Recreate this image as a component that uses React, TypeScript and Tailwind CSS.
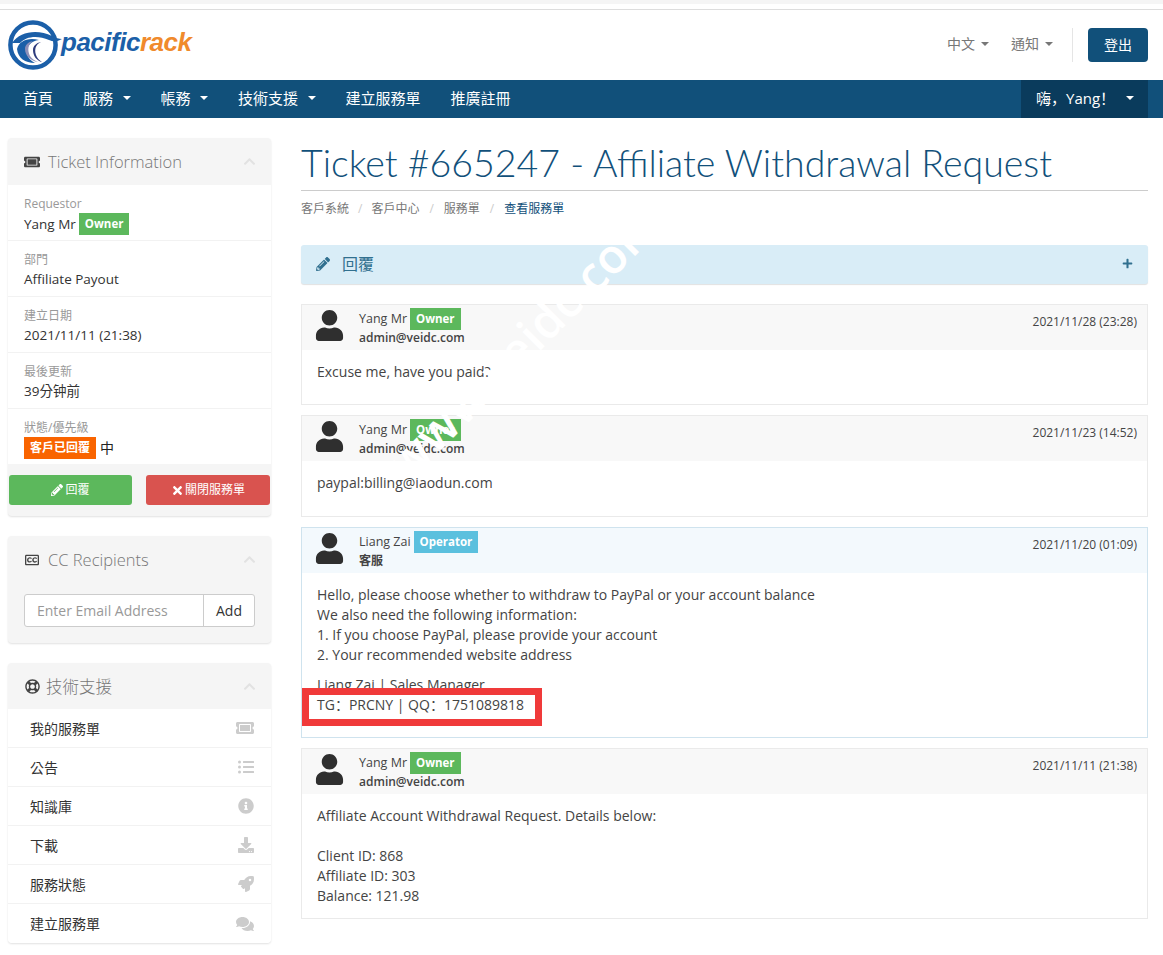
import type { ReactNode } from 'react'
import {
  FaChevronUp,
  FaComments,
  FaDownload,
  FaInfoCircle,
  FaListUl,
  FaPencilAlt,
  FaPlus,
  FaRegClosedCaptioning,
  FaRegLifeRing,
  FaRocket,
  FaTicketAlt,
  FaTimes,
  FaUser,
} from 'react-icons/fa'

const sans = '[font-family:"Open_Sans","Noto_Sans_CJK_TC",sans-serif]'
const sansSc = '[font-family:"Open_Sans","Noto_Sans_CJK_SC",sans-serif]'

function Caret({ className = 'border-t-white' }: { className?: string }) {
  return <span className={`inline-block h-0 w-0 border-x-[4px] border-t-[4px] border-x-transparent ${className}`} />
}

function Logo() {
  return (
    <div className="flex items-center">
      <svg width="54" height="52" viewBox="0 0 54 52">
        <circle cx="25" cy="26" r="22.6" fill="none" stroke="#1b5fa8" strokeWidth="4.5" />
        <path d="M4 24C12 12 30 10 44 17c4 2 7 3 10 3-5 3-9 3-13 1C30 16 18 17 12 24Z" fill="#1b5fa8" />
        <path d="M9 30c2-8 11-12 22-9-8 1-13 6-12 14 1 4 4 7 8 9-10 0-17-5-18-14Z" fill="#1b5fa8" />
        <path d="M25 22c-5 3-6 9-3 15 2 3 5 5 8 6-7-1-13-6-13-13 0-4 3-7 8-8Z" fill="#8d8fb8" />
        <path d="M33 23c-5 2-7 7-5 13 1 3 3 5 6 7-5-1-9-6-9-12 0-4 3-7 8-8Z" fill="#2d3b7c" />
      </svg>
      <span className="-ml-[1px] -mt-[7px] text-[26px] font-bold italic leading-none tracking-[-0.5px] [font-family:'Liberation_Sans',sans-serif]">
        <span className="text-[#1b5fa8]">pacific</span>
        <span className="text-[#f08a2c]">rack</span>
      </span>
    </div>
  )
}

function Header() {
  return (
    <header className="flex h-[70px] items-center justify-between bg-white pl-2 pr-[15px]">
      <Logo />
      <div className="flex items-center text-[14px] text-[#777]">
        <span className="flex items-center gap-[6px] pb-[3px]">
          中文 <Caret className="border-t-[#777]" />
        </span>
        <span className="ml-[22px] flex items-center gap-[6px] pb-[3px]">
          通知 <Caret className="border-t-[#777]" />
        </span>
        <span className="ml-[19px] h-[34px] w-px bg-[#e5e5e5]" />
        <span className="ml-[15px] flex h-[34px] w-[60px] items-center justify-center rounded bg-[#11507a] pb-[2px] text-white">登出</span>
      </div>
    </header>
  )
}

function Nav() {
  const items = [
    { label: '首頁', caret: false },
    { label: '服務', caret: true },
    { label: '帳務', caret: true },
    { label: '技術支援', caret: true },
    { label: '建立服務單', caret: false },
    { label: '推廣註冊', caret: false },
  ]
  return (
    <nav className="flex h-[38px] items-center justify-between bg-[#11507a] pl-[23px] pr-[15px] text-[15px] text-white">
      <div className="flex items-center gap-[30px] pb-[2px]">
        {items.map((item) => (
          <span className="flex items-center gap-[9.5px]" key={item.label}>
            {item.label}
            {item.caret && <Caret />}
          </span>
        ))}
      </div>
      <div className={`flex h-[38px] w-[127px] items-center gap-[11px] bg-[#0a3b5c] pb-[2px] pl-[15px] ${sansSc}`}>
        <span>嗨，Yang！</span>
        <Caret />
      </div>
    </nav>
  )
}

function Panel({ icon, title, bigTitle, children }: { icon: ReactNode; title: string; bigTitle?: boolean; children: ReactNode }) {
  return (
    <section className="rounded bg-[#f5f5f5] shadow-[0_1px_2px_rgba(0,0,0,0.12)]">
      <div className={`flex items-center pl-[16px] pr-[15px] text-[#777] ${bigTitle ? 'h-[46px]' : 'h-[47px]'}`}>
        <span className={`flex w-4 items-center justify-center text-[#555] ${bigTitle ? 'mr-[6px]' : 'mr-[8px]'}`}>{icon}</span>
        <h3 className="mt-[2px] text-[16.5px] font-light">{title}</h3>
        <FaChevronUp className="ml-auto text-[13px] text-[#e2e2e2]" />
      </div>
      {children}
    </section>
  )
}

function InfoRow({ label, children }: { label: string; children: ReactNode }) {
  return (
    <div className="h-[56px] border-b border-[#f2f2f2] pl-[16px] pt-[10px] last:h-[55px] last:border-b-0">
      <div className="text-[12px] leading-[17px] text-[#999]">{label}</div>
      <div className="mt-[1px] flex items-center text-[13.5px] leading-[20px] text-[#333]">{children}</div>
    </div>
  )
}

function Badge({ color, children }: { color: string; children: ReactNode }) {
  return <span className={`ml-[3px] inline-flex h-[22px] items-center px-[6px] text-[11.5px] font-bold text-white ${color}`}>{children}</span>
}

function TicketInfo() {
  return (
    <Panel icon={<FaTicketAlt className="text-[16px] text-[#444]" />} title="Ticket Information">
      <div className="bg-white">
        <InfoRow label="Requestor">
          Yang Mr <Badge color="bg-[#5cb85c]">Owner</Badge>
        </InfoRow>
        <InfoRow label="部門">Affiliate Payout</InfoRow>
        <InfoRow label="建立日期">2021/11/11 (21:38)</InfoRow>
        <InfoRow label="最後更新">39分钟前</InfoRow>
        <InfoRow label="狀態/優先級">
          <span className="inline-flex h-[22px] items-center bg-[#f96400] px-[6px] text-[12px] font-bold text-white">客戶已回覆</span>
          <span className="ml-1 text-[14px] text-[#222]">中</span>
        </InfoRow>
      </div>
      <div className="flex justify-between px-px pb-[11px] pt-[11px]">
        <button className="flex h-[30px] w-[123px] items-center justify-center gap-[2px] rounded-[3px] bg-[#5cb85c] text-[12px] text-white">
          <FaPencilAlt className="text-[12px]" />
          回覆
        </button>
        <button className="flex h-[30px] w-[124px] items-center justify-center gap-[1px] rounded-[3px] bg-[#d9534f] text-[12px] text-white">
          <FaTimes className="text-[13px]" />
          關閉服務單
        </button>
      </div>
    </Panel>
  )
}

function CcPanel() {
  return (
    <Panel icon={<FaRegClosedCaptioning className="text-[14px] text-[#444]" />} title="CC Recipients">
      <div className="px-[16px] pb-[16px] pt-[11px]">
        <div className="flex h-[33px] rounded-[3px] border border-[#ccc] bg-white text-[14px]">
          <div className="flex flex-1 items-center pl-3 text-[#999]">Enter Email Address</div>
          <div className="flex w-[51px] items-center justify-center border-l border-[#ccc] text-[#333]">Add</div>
        </div>
      </div>
    </Panel>
  )
}

function SupportPanel() {
  const rows = [
    { label: '我的服務單', icon: <FaTicketAlt className="text-[18px]" /> },
    { label: '公告', icon: <FaListUl className="text-[16px]" /> },
    { label: '知識庫', icon: <FaInfoCircle className="text-[16px]" /> },
    { label: '下載', icon: <FaDownload className="text-[16px]" /> },
    { label: '服務狀態', icon: <FaRocket className="text-[16px]" /> },
    { label: '建立服務單', icon: <FaComments className="text-[18px]" /> },
  ]
  return (
    <Panel icon={<FaRegLifeRing className="text-[15px] text-[#444]" />} title="技術支援" bigTitle>
      <div className="rounded-b bg-white">
        {rows.map((row) => (
          <div className="flex h-[39px] items-center justify-between border-b border-[#f2f2f2] pl-[22px] pr-[17px] text-[14px] text-[#333] last:border-b-0" key={row.label}>
            {row.label}
            <span className="text-[#ccc]">{row.icon}</span>
          </div>
        ))}
      </div>
    </Panel>
  )
}

function Message({
  name,
  sub,
  date,
  role,
  height,
  staff,
  children,
}: {
  name: string
  sub: string
  date: string
  role: string
  height: number
  staff?: boolean
  children: ReactNode
}) {
  return (
    <article
      className={`border bg-white ${staff ? 'border-[#cfe3ee]' : 'border-[#eaeaea]'}`}
      style={{ height }}
    >
      <div className={`flex h-[45px] items-start ${staff ? 'bg-[#f3f9fd]' : 'bg-[#f8f8f8]'}`}>
        <FaUser className="ml-[12px] mt-[5px] text-[31px] text-[#2f2f2f]" />
        <div className="ml-[14px] pt-[3px]">
          <div className="flex h-[22px] items-center text-[12.5px] text-[#444]">
            {name}
            <Badge color={staff ? 'bg-[#5bc0de]' : 'bg-[#5cb85c]'}>{role}</Badge>
          </div>
          <div className="text-[12px] font-semibold leading-[15px] text-[#444]">{sub}</div>
        </div>
        <div className="ml-auto mr-[10px] pt-[8px] text-[12px] text-[#444]">{date}</div>
      </div>
      <div className="px-[15px] pt-[12px] text-[14px] leading-[20px] text-[#444]">{children}</div>
    </article>
  )
}

function Main() {
  return (
    <main className="flex-1">
      <h1 className="border-b border-[#ccc] pb-[2px] text-[37.5px] font-light leading-[50px] text-[#11507a] [font-family:'Lato','Open_Sans',sans-serif]">
        Ticket #665247 - Affiliate Withdrawal Request
      </h1>
      <div className="mt-[9px] flex h-[18px] items-center text-[12px] text-[#777]">
        <span>客戶系統</span>
        <span className="mx-[9px] text-[#ccc]">/</span>
        <span>客戶中心</span>
        <span className="mx-[10px] text-[#ccc]">/</span>
        <span>服務單</span>
        <span className="mx-[10px] text-[#ccc]">/</span>
        <span className="text-[#11507a]">查看服務單</span>
      </div>
      <div className="mt-[27px] flex h-[39px] items-center rounded-[3px] bg-[#d9edf7] pb-[2px] pl-[15px] pr-[15px] text-[16px] text-[#31708f] shadow-[0_1px_1px_rgba(0,0,0,0.12)]">
        <FaPencilAlt className="mr-[12px] text-[14px]" />
        回覆
        <FaPlus className="ml-auto text-[11px]" />
      </div>

      <div className="mt-[20px] flex flex-col gap-[10px]">
        <Message name="Yang Mr" role="Owner" sub="admin@veidc.com" date="2021/11/28 (23:28)" height={101}>
          Excuse me, have you paid?
        </Message>
        <Message name="Yang Mr" role="Owner" sub="admin@veidc.com" date="2021/11/23 (14:52)" height={102}>
          paypal:billing@iaodun.com
        </Message>
        <Message name="Liang Zai" role="Operator" sub="客服" date="2021/11/20 (01:09)" height={211} staff>
          <p>Hello, please choose whether to withdraw to PayPal or your account balance</p>
          <p>We also need the following information:</p>
          <p>1. If you choose PayPal, please provide your account</p>
          <p>2. Your recommended website address</p>
          <div className="relative mt-[10px]">
            <p>Liang Zai | Sales Manager</p>
            <p className={sansSc}>TG：PRCNY | QQ：1751089818</p>
            <div className="absolute left-[-15px] top-[13px] h-[38px] w-[240px] border-[7px] border-[#f03a3a]" />
          </div>
        </Message>
        <Message name="Yang Mr" role="Owner" sub="admin@veidc.com" date="2021/11/11 (21:38)" height={171}>
          <p>Affiliate Account Withdrawal Request. Details below:</p>
          <p className="mt-[20px]">Client ID: 868</p>
          <p>Affiliate ID: 303</p>
          <p>Balance: 121.98</p>
        </Message>
      </div>
    </main>
  )
}

export default function App() {
  return (
    <div className={`relative h-[955px] overflow-hidden bg-white ${sans}`}>
      <div className="h-[4px] bg-[#f5f5f5]" />
      <div className="h-[6px] border-b border-[#ddd]" />
      <Header />
      <Nav />
      <div className="flex gap-[30px] pl-[8px] pr-[15px] pt-[20px]">
        <aside className="flex w-[263px] shrink-0 flex-col gap-[20px]">
          <TicketInfo />
          <CcPanel />
          <SupportPanel />
        </aside>
        <Main />
      </div>
      {/* white watermark across the first two messages */}
      <div className="pointer-events-none absolute left-[342px] top-[318px] origin-center -rotate-[45deg] whitespace-nowrap text-[48px] font-semibold leading-none text-white">
        www.veidc.com
      </div>
    </div>
  )
}
